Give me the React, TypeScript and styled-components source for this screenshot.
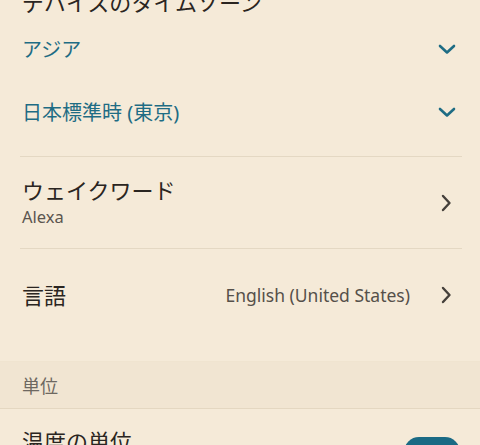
import styled, { createGlobalStyle } from 'styled-components';

const GlobalStyle = createGlobalStyle`
  html, body {
    margin: 0;
    padding: 0;
    background: #f5ead8;
    overflow: hidden;
  }
  body {
    font-family: "Noto Sans", "Noto Sans CJK JP", sans-serif;
    color: #2a2521;
  }
`;

function ChevronDown() {
  return (
    <svg width="18" height="12" viewBox="0 0 18 12" fill="none">
      <path d="M2 3 L9 9.5 L16 3" stroke="#1e6c84" strokeWidth="2.6" strokeLinecap="round" strokeLinejoin="round" />
    </svg>
  );
}

function ChevronRight() {
  return (
    <svg width="12" height="18" viewBox="0 0 12 18" fill="none">
      <path d="M3 2 L9.5 9 L3 16" stroke="#45403b" strokeWidth="2.4" strokeLinecap="round" strokeLinejoin="round" />
    </svg>
  );
}

function App() {
  return (
    <>
      <GlobalStyle />
      <Page>
        <TimeZoneSection>
          <Title>デバイスのタイムゾーン</Title>
          <DropdownRow>
            <DropdownText>アジア</DropdownText>
            <ChevronDown />
          </DropdownRow>
          <DropdownRow>
            <DropdownText>日本標準時 (東京)</DropdownText>
            <ChevronDown />
          </DropdownRow>
        </TimeZoneSection>
        <Divider />
        <NavRow $height={91}>
          <TextBlock>
            <RowLabel>ウェイクワード</RowLabel>
            <SubText>Alexa</SubText>
          </TextBlock>
          <ChevronRight />
        </NavRow>
        <Divider />
        <NavRow $height={92}>
          <RowLabel>言語</RowLabel>
          <Trailing>
            <ValueText>English (United States)</ValueText>
            <ChevronRight />
          </Trailing>
        </NavRow>
        <SectionHeader>単位</SectionHeader>
        <ToggleRow>
          <RowLabel>温度の単位</RowLabel>
          <Toggle />
        </ToggleRow>
      </Page>
    </>
  );
}

export default App;

const Page = styled.div`
  display: flex;
  flex-direction: column;
  width: 480px;
  margin-top: -13px;
`;

const TimeZoneSection = styled.div`
  display: flex;
  flex-direction: column;
  padding: 0 22px 13px 22px;
`;

const Title = styled.div`
  font-size: 22px;
  line-height: 30px;
  height: 30px;
  color: #2a2521;
`;

const DropdownRow = styled.div`
  display: flex;
  align-items: center;
  justify-content: space-between;
  height: 63px;
  padding-right: 2px;
`;

const DropdownText = styled.span`
  font-size: 20px;
  color: #1e6c84;
`;

const Divider = styled.div`
  height: 1px;
  margin: 0 18px 0 20px;
  background: #e4d8c3;
`;

const NavRow = styled.div<{ $height: number }>`
  display: flex;
  align-items: center;
  justify-content: space-between;
  height: ${(p) => p.$height}px;
  padding: 0 28px 0 22px;
`;

const TextBlock = styled.div`
  display: flex;
  flex-direction: column;
`;

const RowLabel = styled.span`
  font-size: 22px;
  line-height: 28px;
  color: #2a2521;
`;

const SubText = styled.span`
  font-size: 16.5px;
  line-height: 26px;
  color: #5b554f;
`;

const Trailing = styled.div`
  display: flex;
  align-items: center;
  gap: 30px;
`;

const ValueText = styled.span`
  font-size: 17.5px;
  color: #55504a;
`;

const SectionHeader = styled.div`
  display: flex;
  align-items: center;
  height: 46px;
  margin-top: 20px;
  padding: 0 22px;
  font-size: 18px;
  color: #6e6861;
  background: #f1e5d2;
  border-top: 1px solid #f0e4d0;
  border-bottom: 1px solid #e4d7c1;
`;

const ToggleRow = styled.div`
  display: flex;
  align-items: flex-start;
  justify-content: space-between;
  padding: 18px 20px 0 22px;
  height: 60px;
`;

const Toggle = styled.div`
  width: 56px;
  height: 30px;
  margin-top: 10px;
  border-radius: 15px;
  background: #1a6a84;
`;
